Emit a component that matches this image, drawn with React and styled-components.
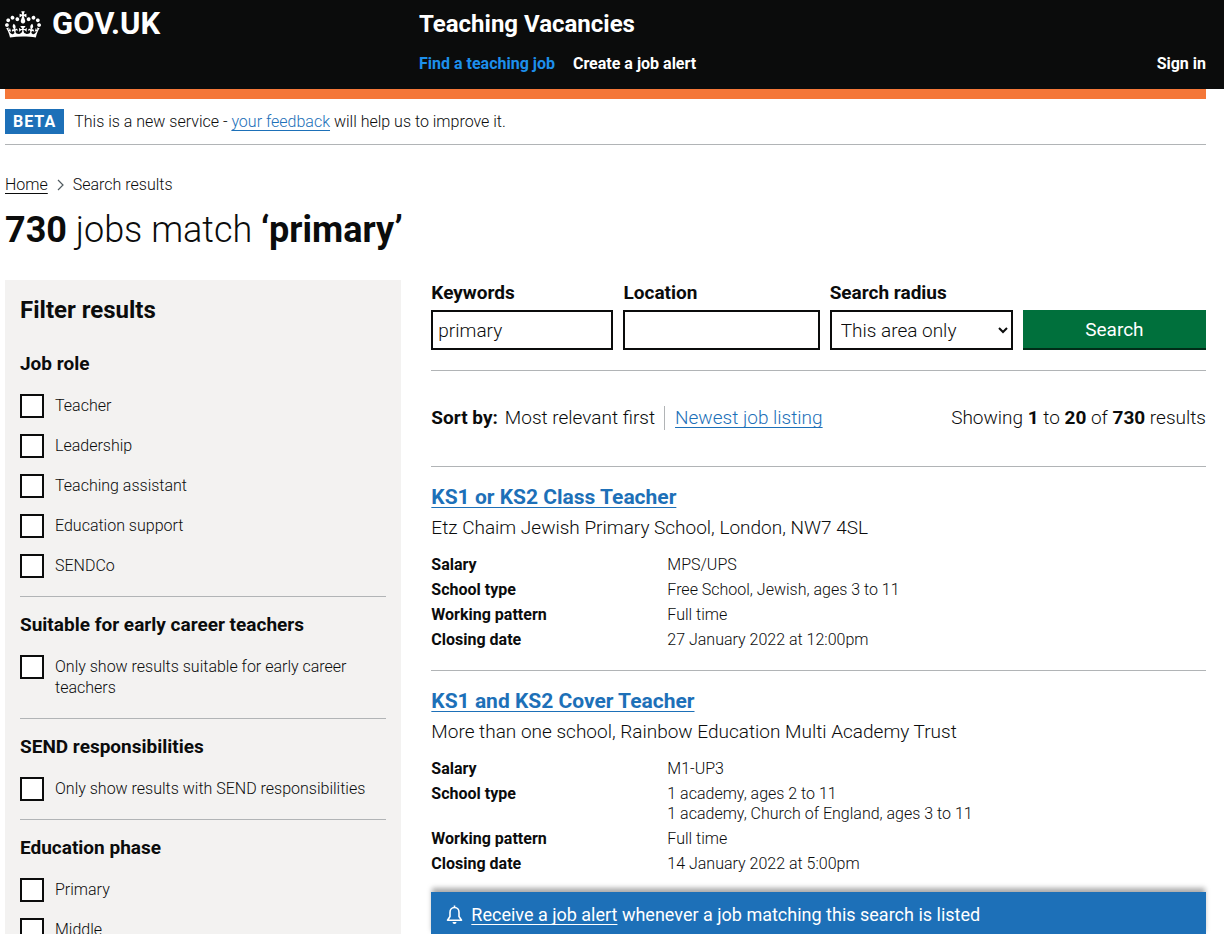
import React from "react";
import styled, { createGlobalStyle } from "styled-components";

const ink = "#0b0c0c";
const blue = "#1d70b8";
const rule = "#b1b4b6";

const GlobalStyle = createGlobalStyle`
  * { box-sizing: border-box; }
  body {
    margin: 0;
    background: #fff;
    color: ${ink};
    font-family: Roboto, "Liberation Sans", sans-serif;
    font-size: 16px;
    font-weight: 350;
    line-height: 20px;
  }
  h1, h2, h3, p, dl, dd, ol, ul, fieldset { margin: 0; padding: 0; border: 0; list-style: none; }
  b, dt { font-weight: 700; }
`;

const Page = styled.div`
  height: 100vh;
  overflow: hidden;
`;

const Container = styled.div`
  margin: 0 18px 0 5px;
`;

const Header = styled.header`
  background: ${ink};
  color: #fff;
`;

const HeaderInner = styled(Container)`
  display: flex;
  height: 89px;
  padding-top: 9px;
`;

const Logo = styled.a`
  display: flex;
  align-items: center;
  gap: 11px;
  flex: 0 0 414px;
  height: 30px;
  color: #fff;
  font-size: 31px;
  font-weight: 700;
  line-height: 30px;
  text-decoration: none;
`;

const HeaderContent = styled.div`
  flex: 1;
`;

const ServiceName = styled.a`
  display: block;
  color: #fff;
  font-size: 24px;
  font-weight: 700;
  line-height: 30px;
  text-decoration: none;
`;

const Nav = styled.nav`
  display: flex;
  gap: 18px;
  margin-top: 15px;
`;

const NavLink = styled.a`
  color: ${(p) => (p.$active ? "#1d8feb" : "#fff")};
  font-weight: 700;
  text-decoration: none;
  ${(p) => p.$end && "margin-left: auto;"}
`;

const PhaseBanner = styled.div`
  display: flex;
  align-items: center;
  gap: 10px;
  height: 56px;
  border-top: 10px solid #f47738;
  border-bottom: 1px solid ${rule};
`;

const Tag = styled.strong`
  padding: 0 8px;
  background: ${blue};
  color: #fff;
  font-weight: 700;
  letter-spacing: 1px;
  line-height: 25px;
`;

const Link = styled.a`
  color: ${(p) => p.$color || blue};
  text-decoration: underline;
  text-decoration-thickness: 1px;
  text-underline-offset: 3px;
  text-decoration-skip-ink: none;
`;

const Breadcrumbs = styled.ol`
  display: flex;
  align-items: center;
  gap: 9px;
  margin-top: 30px;
`;

const Crumb = styled.li`
  display: flex;
  align-items: center;
  gap: 9px;
`;

const Title = styled.h1`
  margin: 15px 0 30px;
  font-size: 36px;
  font-weight: 350;
  line-height: 40px;
`;

const Columns = styled.div`
  display: flex;
  align-items: flex-start;
  gap: 30px;
`;

const Sidebar = styled.form`
  flex: 0 0 33%;
  padding: 15px;
  background: #f3f2f1;
`;

const FilterTitle = styled.h2`
  margin-bottom: 11px;
  font-size: 24px;
  font-weight: 700;
  line-height: 30px;
`;

const FilterGroup = styled.fieldset`
  padding: 15px 0 17px;
  border-bottom: 1px solid ${rule};
`;

const Legend = styled.legend`
  float: left;
  width: 100%;
  margin-bottom: 18px;
  padding: 0;
  font-size: 19px;
  font-weight: 700;
  line-height: 25px;
`;

const Options = styled.div`
  display: flex;
  flex-direction: column;
  gap: 15px;
  clear: both;
`;

const Option = styled.label`
  display: flex;
  align-items: flex-start;
  gap: 11px;
  line-height: 21px;
`;

const OptionText = styled.span`
  padding: 1px 0 3px;
`;

const Box = styled.input`
  appearance: none;
  flex: none;
  width: 24px;
  height: 24px;
  margin: 0;
  border: 2px solid ${ink};
  background: #fff;
`;

const Main = styled.main`
  flex: 1;
  min-width: 0;
`;

const SearchForm = styled.form`
  display: grid;
  grid-template-columns: 182fr 196fr 183fr 183fr;
  gap: 10px;
  align-items: end;
  padding-bottom: 20px;
  border-bottom: 1px solid ${rule};
`;

const Field = styled.label`
  display: flex;
  flex-direction: column;
  gap: 5px;
  min-width: 0;
  font-size: 19px;
  font-weight: 700;
  line-height: 25px;
`;

const Input = styled.input`
  width: 100%;
  height: 40px;
  padding: 5px;
  border: 2px solid ${ink};
  border-radius: 0;
  background: #fff;
  color: ${ink};
  font-family: inherit;
  font-size: 19px;
  font-weight: 350;
`;

const SearchButton = styled.button`
  height: 40px;
  border: 0;
  border-bottom: 2px solid #002d18;
  background: #00703c;
  color: #fff;
  font-family: inherit;
  font-size: 19px;
  font-weight: 400;
`;

const SortBar = styled.div`
  display: flex;
  justify-content: space-between;
  align-items: center;
  height: 96px;
  padding-bottom: 1px;
  border-bottom: 1px solid ${rule};
  font-size: 19px;
  line-height: 24px;
`;

const SortOptions = styled.div`
  display: flex;
  gap: 7px;
`;

const SortLink = styled.span`
  margin-left: 2px;
  padding-left: 10px;
  border-left: 1px solid ${rule};
`;

const Job = styled.article`
  padding: 15px 0 ${(p) => (p.$last ? 18 : 20)}px;
  border-bottom: ${(p) => (p.$last ? 0 : 1)}px solid ${rule};
`;

const JobTitle = styled.h2`
  font-size: 21px;
  font-weight: 700;
  line-height: 30px;
`;

const Employer = styled.p`
  margin: 3px 0 15px;
  font-size: 19px;
  line-height: 25px;
`;

const Details = styled.dl`
  display: grid;
  grid-template-columns: 236px 1fr;
  row-gap: 5px;
`;

const AlertBar = styled.aside`
  display: flex;
  align-items: center;
  gap: 8px;
  padding: 10px 15px;
  background: ${blue};
  box-shadow: 0 -5px 5px -1px rgba(11, 12, 12, 0.35);
  color: #fff;
  font-size: 18px;
  font-weight: 400;
  line-height: 25px;
`;

const Crown = () => (
  <svg width="36" height="27" viewBox="0 0 132 97" fill="currentColor" aria-hidden="true">
    <path
      fillRule="evenodd"
      d="M25 30.2c3.5 1.5 7.7-.2 9.1-3.7 1.5-3.6-.2-7.8-3.9-9.2-3.6-1.4-7.6.3-9.1 3.9-1.4 3.5.3 7.5 3.9 9zM9 39.5c3.6 1.5 7.8-.2 9.2-3.7 1.5-3.6-.2-7.8-3.9-9.1-3.6-1.5-7.6.2-9.1 3.8-1.4 3.5.3 7.5 3.8 9zM4.4 57.2c3.5 1.5 7.7-.2 9.1-3.8 1.5-3.6-.2-7.7-3.9-9.1-3.5-1.5-7.6.3-9.1 3.8-1.4 3.5.3 7.6 3.9 9.1zm38.3-21.4c3.5 1.5 7.7-.2 9.1-3.8 1.5-3.6-.2-7.7-3.9-9.1-3.6-1.5-7.6.3-9.1 3.8-1.3 3.6.4 7.7 3.9 9.1zm64.4-5.6c-3.6 1.5-7.8-.2-9.1-3.7-1.5-3.6.2-7.8 3.8-9.2 3.6-1.4 7.7.3 9.2 3.9 1.3 3.5-.4 7.5-3.9 9zm15.9 9.3c-3.6 1.5-7.7-.2-9.1-3.7-1.5-3.6.2-7.8 3.7-9.1 3.6-1.5 7.7.2 9.2 3.8 1.5 3.5-.3 7.5-3.8 9zm4.7 17.7c-3.6 1.5-7.8-.2-9.2-3.8-1.5-3.6.2-7.7 3.9-9.1 3.6-1.5 7.7.3 9.2 3.8 1.3 3.5-.4 7.6-3.9 9.1zM89.3 35.8c-3.6 1.5-7.8-.2-9.2-3.8-1.4-3.6.2-7.7 3.9-9.1 3.6-1.5 7.7.3 9.2 3.8 1.4 3.6-.3 7.7-3.9 9.1zM69.7 17.7l8.9 4.7V9.3l-8.9 2.8c-.2-.3-.5-.6-.9-.9L72.4 0H59.6l3.5 11.2c-.3.3-.6.5-.9.9l-8.8-2.8v13.1l8.8-4.7c.3.3.6.7.9.9l-5 15.4v.1c-.2.8-.4 1.6-.4 2.4 0 4.1 3.1 7.5 7 8.1h.2c.3 0 .7.1 1 .1.4 0 .7 0 1-.1h.2c4-.6 7.1-4.1 7.1-8.1 0-.8-.1-1.7-.4-2.4V34l-5.1-15.4c.4-.2.7-.6 1-.9zM66 92.8c16.9 0 32.8 1.1 47.1 3.2 4-16.9 8.9-26.7 14-33.5l-9.6-3.4c1 4.9 1.1 7.2 0 10.2-1.5-1.4-3-4.3-4.2-8.7L108.6 76c2.8-2 5-3.2 7.5-3.3-4.4 9.4-10 11.9-13.6 11.2-4.3-.8-6.3-4.6-5.6-7.9 1-4.7 5.7-5.9 8-.5 4.3-8.7-3-11.4-7.6-8.8 7.1-7.2 7.9-13.5 2.1-21.1-8 6.1-8.1 12.3-4.5 20.8-4.7-5.4-12.1-2.5-9.5 6.2 3.4-5.2 7.9-2 7.2 3.1-.6 4.3-6.4 7.8-13.5 7.2-10.3-.9-10.9-8-11.2-13.8 2.5-.5 7.1 1.8 11 7.3L80.2 60c-4.1 4.4-8 5.3-12.3 5.4 1.4-4.4 8-11.6 8-11.6H55.5s6.4 7.2 7.9 11.6c-4.2-.1-8-1-12.3-5.4l1.4 16.4c3.9-5.5 8.5-7.7 10.9-7.3-.3 5.8-.9 12.8-11.1 13.8-7.2.6-12.9-2.9-13.5-7.2-.7-5 3.8-8.3 7.1-3.1 2.7-8.7-4.6-11.6-9.4-6.2 3.7-8.5 3.6-14.7-4.6-20.8-5.8 7.6-5 13.9 2.2 21.1-4.7-2.6-11.9.1-7.7 8.8 2.3-5.5 7.1-4.2 8.1.5.7 3.3-1.3 7.1-5.7 7.9-3.5.7-9-1.8-13.5-11.2 2.5.1 4.7 1.3 7.5 3.3l-4.7-15.4c-1.2 4.4-2.7 7.2-4.3 8.7-1.1-3-.9-5.3 0-10.2l-9.5 3.4c5 6.9 9.9 16.7 14 33.5 14.8-2.1 30.8-3.2 47.7-3.2z"
    />
  </svg>
);

const Chevron = () => (
  <svg width="7" height="12" viewBox="0 0 7 12" fill="none" stroke="#505a5f" strokeWidth="1.2" aria-hidden="true">
    <path d="M1 1L6 6L1 11" />
  </svg>
);

const Bell = () => (
  <svg width="17" height="20" viewBox="0 0 17 20" fill="none" stroke="currentColor" strokeWidth="1.6" aria-hidden="true">
    <path d="M8.5 2.5C5.5 2.500 4 5 4 7.500V11.500L1.500 15.200H15.500L13 11.500V7.500C13 5 11.500 2.500 8.500 2.500Z" strokeLinejoin="round" />
    <path d="M8.500 0.500V2.500" />
    <path d="M6.500 17A2 2 0 0 0 10.500 17Z" fill="currentColor" stroke="none" />
  </svg>
);

const groups = [
  { name: "Job role", options: ["Teacher", "Leadership", "Teaching assistant", "Education support", "SENDCo"] },
  { name: "Suitable for early career teachers", options: ["Only show results suitable for early career teachers"] },
  { name: "SEND responsibilities", options: ["Only show results with SEND responsibilities"] },
  { name: "Education phase", options: ["Primary", "Middle"] },
];

const jobs = [
  {
    title: "KS1 or KS2 Class Teacher",
    employer: "Etz Chaim Jewish Primary School, London, NW7 4SL",
    details: [
      ["Salary", ["MPS/UPS"]],
      ["School type", ["Free School, Jewish, ages 3 to 11"]],
      ["Working pattern", ["Full time"]],
      ["Closing date", ["27 January 2022 at 12:00pm"]],
    ],
  },
  {
    title: "KS1 and KS2 Cover Teacher",
    employer: "More than one school, Rainbow Education Multi Academy Trust",
    details: [
      ["Salary", ["M1-UP3"]],
      ["School type", ["1 academy, ages 2 to 11", "1 academy, Church of England, ages 3 to 11"]],
      ["Working pattern", ["Full time"]],
      ["Closing date", ["14 January 2022 at 5:00pm"]],
    ],
  },
];

export default function App() {
  return (
    <Page>
      <GlobalStyle />
      <Header>
        <HeaderInner>
          <Logo href="#"><Crown />GOV.UK</Logo>
          <HeaderContent>
            <ServiceName href="#">Teaching Vacancies</ServiceName>
            <Nav>
              <NavLink href="#" $active>Find a teaching job</NavLink>
              <NavLink href="#">Create a job alert</NavLink>
              <NavLink href="#" $end>Sign in</NavLink>
            </Nav>
          </HeaderContent>
        </HeaderInner>
      </Header>
      <Container>
        <PhaseBanner>
          <Tag>BETA</Tag>
          <p>This is a new service - <Link href="#">your feedback</Link> will help us to improve it.</p>
        </PhaseBanner>
        <Breadcrumbs>
          <Crumb><Link href="#" $color={ink}>Home</Link></Crumb>
          <Crumb><Chevron />Search results</Crumb>
        </Breadcrumbs>
        <Title><b>730</b> jobs match <b>‘primary’</b></Title>
        <Columns>
          <Sidebar>
            <FilterTitle>Filter results</FilterTitle>
            {groups.map((g) => (
              <FilterGroup key={g.name}>
                <Legend>{g.name}</Legend>
                <Options>
                  {g.options.map((o) => (
                    <Option key={o}>
                      <Box type="checkbox" />
                      <OptionText>{o}</OptionText>
                    </Option>
                  ))}
                </Options>
              </FilterGroup>
            ))}
          </Sidebar>
          <Main>
            <SearchForm onSubmit={(e) => e.preventDefault()}>
              <Field>Keywords<Input defaultValue="primary" /></Field>
              <Field>Location<Input /></Field>
              <Field>
                Search radius
                <Input as="select"><option>This area only</option></Input>
              </Field>
              <SearchButton>Search</SearchButton>
            </SearchForm>
            <SortBar>
              <SortOptions>
                <b>Sort by:</b>
                <span>Most relevant first</span>
                <SortLink><Link href="#">Newest job listing</Link></SortLink>
              </SortOptions>
              <p>Showing <b>1</b> to <b>20</b> of <b>730</b> results</p>
            </SortBar>
            {jobs.map((job, i) => (
              <Job key={job.title} $last={i === jobs.length - 1}>
                <JobTitle><Link href="#">{job.title}</Link></JobTitle>
                <Employer>{job.employer}</Employer>
                <Details>
                  {job.details.map(([term, lines]) => (
                    <React.Fragment key={term}>
                      <dt>{term}</dt>
                      <dd>{lines.map((line) => <div key={line}>{line}</div>)}</dd>
                    </React.Fragment>
                  ))}
                </Details>
              </Job>
            ))}
            <AlertBar>
              <Bell />
              <p><Link href="#" $color="#fff">Receive a job alert</Link> whenever a job matching this search is listed</p>
            </AlertBar>
          </Main>
        </Columns>
      </Container>
    </Page>
  );
}
